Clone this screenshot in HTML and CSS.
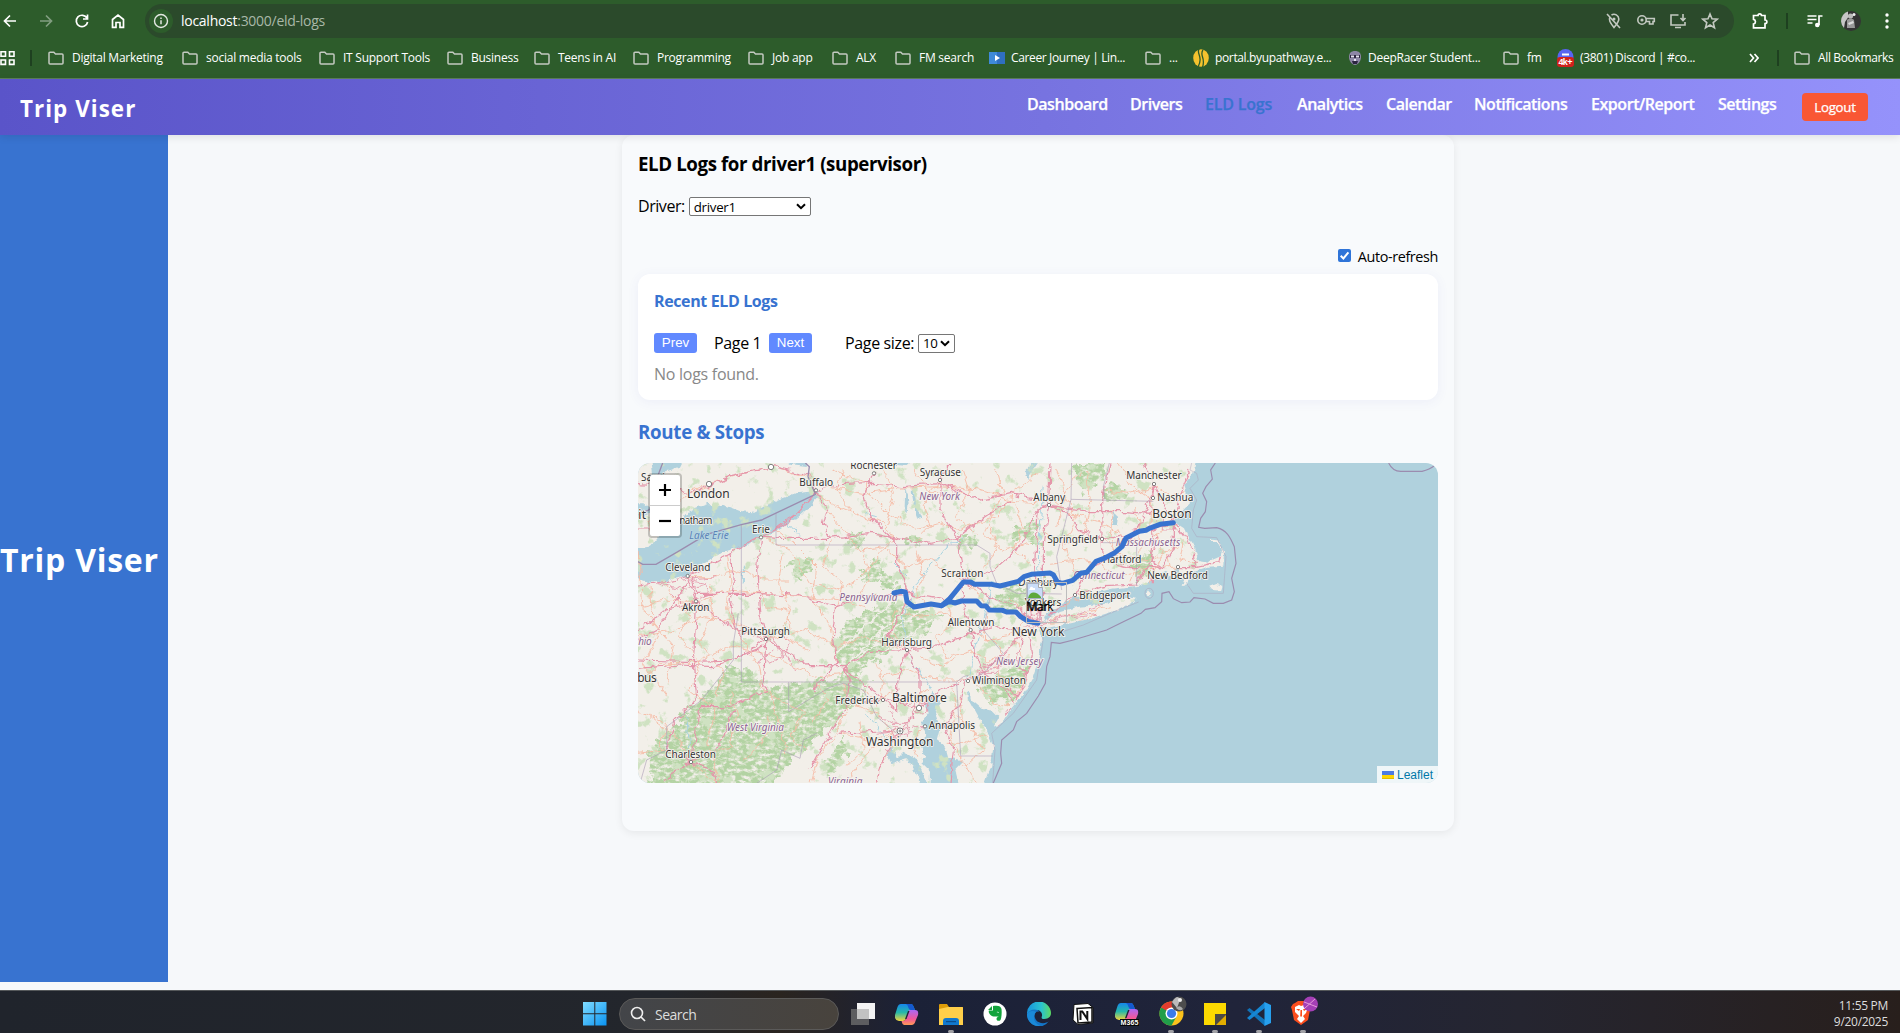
FILE: index.html
```html
<!DOCTYPE html>
<html lang="en">
<head>
<meta charset="utf-8">
<title>Trip Viser</title>
<link rel="stylesheet" href="styles.css">
</head>
<body>
<svg width="0" height="0" class="defs">
  <defs>
    <symbol id="folder" viewBox="0 0 16 14"><path d="M1 2.2V12a1 1 0 0 0 1 1h12a1 1 0 0 0 1-1V4a1 1 0 0 0-1-1H7.5L5.800 1.200H2a1 1 0 0 0-1 1z" fill="none" stroke="#c3c9c1" stroke-width="1.500"/></symbol>
  </defs>
</svg>
<header class="chrome">
  <div class="toolbar">
    <div class="tool"><svg width="16" height="16" viewBox="0 0 16 16"><path d="M14 8H3M8 2.500 2.500 8 8 13.500" class="line"/></svg></div>
    <div class="tool dim"><svg width="16" height="16" viewBox="0 0 16 16"><path d="M2 8h11M8 2.500 13.500 8 8 13.500" class="line"/></svg></div>
    <div class="tool"><svg width="16" height="16" viewBox="0 0 16 16"><path d="M13 5.200A5.700 5.700 0 1 0 13.600 9M13.500 1.500v4.500H9" class="line"/></svg></div>
    <div class="tool"><svg width="16" height="16" viewBox="0 0 16 16"><path d="M2.500 14.300V6.500L8 2l5.500 4.500v7.800H10V9.500H6v4.800z" class="line"/></svg></div>
    <div class="omnibox">
      <span class="info"><svg width="16" height="16" viewBox="0 0 16 16"><circle cx="8" cy="8" r="6.500" fill="none" stroke="#e3e8e2" stroke-width="1.400"/><path d="M8 7.200v4M8 4.400v1.500" stroke="#e3e8e2" stroke-width="1.500"/></svg></span>
      <span class="url"><b>localhost</b>:3000/eld-logs</span>
      <div class="omni-icons">
        <span><svg width="18" height="18" viewBox="0 0 18 18"><path d="M5 4.500C3.500 8 5 10.500 9 15.500 12 12 13.800 9.500 13.800 7A4.800 4.800 0 0 0 6.500 3M2 2l13 14" class="muted"/><circle cx="9" cy="7" r="1.500" fill="#c3c9c1"/></svg></span>
        <span><svg width="20" height="16" viewBox="0 0 20 16"><circle cx="6" cy="8" r="4.200" class="muted"/><circle cx="6" cy="8" r="1.600" fill="#c3c9c1"/><path d="M10 6.500h8.300v3H17v2.500h-3.500V9.500H10" class="muted"/></svg></span>
        <span><svg width="18" height="18" viewBox="0 0 18 18"><path d="M9.500 3H2v10h14v-3M14 2v6M11.500 6 14 8.500 16.500 6M6 15.500h6" class="muted"/></svg></span>
        <span><svg width="18" height="18" viewBox="0 0 18 18"><path d="m9 2 2 4.800 5.200.4-4 3.400 1.300 5.100L9 13l-4.500 2.700 1.300-5.100-4-3.400 5.200-.4z" class="muted"/></svg></span>
      </div>
    </div>
    <div class="tool right"><svg width="18" height="18" viewBox="0 0 18 18"><path d="M2.500 3.500H7c0-2.300 3.500-2.300 3.500 0H14V8c2.500 0 2.500 3.500 0 3.500v4.300H2.500V12c2.600-.5 2.600-4.200 0-4.700z" class="line"/></svg></div>
    <i class="sep"></i>
    <div class="tool"><svg width="18" height="18" viewBox="0 0 18 18"><path d="M1.500 4h9M1.500 7.500h9M1.500 11h5M13 13V4h3.500" class="line"/><circle cx="11.300" cy="13" r="2.300" fill="#fff"/></svg></div>
    <div class="tool"><svg width="20" height="20" viewBox="0 0 20 20"><circle cx="10" cy="10" r="10" fill="#343434"/><path d="M2 4a10 10 0 0 1 5-3.500v6L4 11l-1 6A10 10 0 0 1 2 4z" fill="#c6c6c6"/><circle cx="9.500" cy="5" r="2.600" fill="#bbb"/><circle cx="13" cy="3.500" r="1.500" fill="#eee"/><path d="M6 9c2-2 5-2 7 0l1 8H6z" fill="#999"/><path d="M7 12l5-2 1 2-5 2z" fill="#ddd"/></svg></div>
    <div class="tool last"><svg width="4" height="16" viewBox="0 0 4 16" fill="#fff"><circle cx="2" cy="2" r="1.700"/><circle cx="2" cy="8" r="1.700"/><circle cx="2" cy="14" r="1.700"/></svg></div>
  </div>
  <div class="bookmarks">
    <span class="apps"><svg width="16" height="16" viewBox="0 0 16 16"><path d="M1 1.800h4.500v4.400H1zM9.500 1.800H14v4.400H9.500zM1 10h4.500v4.400H1zM9.500 10H14v4.400H9.500z" fill="none" stroke="#fff" stroke-width="1.600"/></svg><i class="sep"></i></span>
    <span class="bm"><svg class="fold"><use href="#folder"/></svg>Digital Marketing</span>
    <span class="bm"><svg class="fold"><use href="#folder"/></svg>social media tools</span>
    <span class="bm"><svg class="fold"><use href="#folder"/></svg>IT Support Tools</span>
    <span class="bm"><svg class="fold"><use href="#folder"/></svg>Business</span>
    <span class="bm"><svg class="fold"><use href="#folder"/></svg>Teens in AI</span>
    <span class="bm"><svg class="fold"><use href="#folder"/></svg>Programming</span>
    <span class="bm"><svg class="fold"><use href="#folder"/></svg>Job app</span>
    <span class="bm"><svg class="fold"><use href="#folder"/></svg>ALX</span>
    <span class="bm"><svg class="fold"><use href="#folder"/></svg>FM search</span>
    <span class="bm site tight"><svg width="16" height="16" viewBox="0 0 16 16"><path d="M0 2h16v12H0z" fill="#2f6fc0"/><path d="M0 2h8v12H0z" fill="#3f8ad8"/><path d="m6 5 5 3-5 3z" fill="#fff"/></svg>Career Journey | Lin...</span>
    <span class="bm"><svg class="fold"><use href="#folder"/></svg>...</span>
    <span class="bm site tight"><svg width="16" height="18" viewBox="0 0 16 18"><ellipse cx="8" cy="9" rx="7.800" ry="8.800" fill="#f5c22e"/><path d="M6 0C3 5 11 8 5 18M10 1C6 6 13 9 9.500 18" stroke="#2d5c2b" stroke-width="1.300" fill="none"/></svg>portal.byupathway.e...</span>
    <span class="bm site"><svg width="14" height="16" viewBox="0 0 14 16"><path d="M7 1c4 0 6 2 6 6s-3 8-6 8-6-4-6-8 2-6 6-6z" fill="#8d86a5"/><path d="M2 5h10v3H2zM4 11h6l-1 3H5z" fill="#2c2540"/><path d="M3 5.500h3v2H3zM8 5.500h3v2H8zM6 9h2v2H6z" fill="#e8e4f2"/></svg>DeepRacer Student...</span>
    <span class="bm"><svg class="fold"><use href="#folder"/></svg>fm</span>
    <span class="bm site tight"><svg width="17" height="18" viewBox="0 0 17 18"><circle cx="8.500" cy="8" r="8" fill="#5865f2"/><path d="M5 4.500h7v2H5z" fill="#fff"/><rect y="8" width="17" height="10" rx="3" fill="#d0211c"/><text x="1.500" y="16" class="badge" textLength="14">4k+</text></svg>(3801) Discord | #co...</span>
    <span class="more"><svg width="10" height="10" viewBox="0 0 10 10"><path d="m1 1 3.500 4L1 9M5.500 1 9 5 5.500 9" class="line"/></svg><i class="sep"></i></span>
    <span class="bm tight"><svg class="fold"><use href="#folder"/></svg>All Bookmarks</span>
  </div>
</header>

<nav class="navbar">
  <div class="brand">Trip Viser</div>
  <div class="links">
    <a>Dashboard</a><a>Drivers</a><a class="active">ELD Logs</a><a>Analytics</a><a>Calendar</a><a>Notifications</a><a>Export/Report</a><a>Settings</a>
    <button class="logout">Logout</button>
  </div>
</nav>

<div class="page">
  <aside class="sidebar">Trip Viser</aside>
  <main class="main">
    <section class="panel">
      <h3 class="title">ELD Logs for driver1 (supervisor)</h3>
      <div class="driver"><label>Driver:</label><span class="select wide">driver1<svg width="10" height="7" viewBox="0 0 10 7"><path d="m1 1.200 4 4 4-4"/></svg></span></div>
      <div class="refresh"><span class="check"><svg width="13" height="13" viewBox="0 0 13 13"><path d="m2.700 6.800 2.700 2.700 5-6.200" fill="none" stroke="#fff" stroke-width="2"/></svg></span><span>Auto-refresh</span></div>
      <div class="card">
        <h4>Recent ELD Logs</h4>
        <div class="pager"><button class="pg">Prev</button><span class="pageno">Page 1</span><button class="pg">Next</button><span class="size">Page size:</span><span class="select small">10<svg width="10" height="7" viewBox="0 0 10 7"><path d="m1 1.200 4 4 4-4"/></svg></span></div>
        <p class="empty">No logs found.</p>
      </div>
      <h3 class="route">Route &amp; Stops</h3>
      <div class="map">
        <svg class="tiles" viewBox="24 39 2400 960" width="800" height="320">
          <defs>
            <filter id="rough" x="-5%" y="-5%" width="110%" height="110%"><feTurbulence type="fractalNoise" baseFrequency=".035" numOctaves="3" seed="4"/><feDisplacementMap in="SourceGraphic" scale="26" xChannelSelector="R" yChannelSelector="G"/></filter>
            <filter id="coast" x="-5%" y="-5%" width="110%" height="110%"><feTurbulence type="fractalNoise" baseFrequency=".05" numOctaves="3" seed="9"/><feDisplacementMap in="SourceGraphic" scale="16" xChannelSelector="R" yChannelSelector="G"/></filter>
            <filter id="woods" x="0" y="0" width="100%" height="100%"><feTurbulence type="fractalNoise" baseFrequency=".03" numOctaves="4" seed="7" result="n"/><feDisplacementMap in="SourceGraphic" in2="n" scale="60" xChannelSelector="R" yChannelSelector="G" result="d"/><feTurbulence type="fractalNoise" baseFrequency=".06 .09" numOctaves="4" seed="3" result="f"/><feColorMatrix in="f" values="0 0 0 0 0  0 0 0 0 0  0 0 0 0 0  0 3 0 0 -.75" result="m"/><feComposite in="d" in2="m" operator="in"/></filter>
            <filter id="specks" x="0" y="0" width="100%" height="100%"><feTurbulence type="fractalNoise" baseFrequency=".025" numOctaves="5" seed="21" result="n"/><feColorMatrix in="n" values="0 0 0 0 0  0 0 0 0 0  0 0 0 0 0  0 9 0 0 -5.500" result="m"/><feComposite in="SourceGraphic" in2="m" operator="in"/></filter>
            <clipPath id="landclip"><path d="M24 39H1695L1685 70 1660 110 1670 160 1640 190 1630 215 1660 235 1675 260 1690 290 1700 325 1780 320 1780 345 1700 355 1600 400 1508 408 1520 450 1380 506 1250 530 1215 550 1225 590 1205 680 1140 780 1100 835 1060 780 1010 720 1040 790 1088 880 1060 999H24z"/></clipPath>
          </defs>
          <rect x="24" y="39" width="2400" height="960" fill="#b0d1dd"/>
          <g filter="url(#coast)" fill="#f2efe9">
            <path d="M0 20H1700L1690 70 1662 105 1680 160 1650 190 1632 215 1662 235 1675 265 1695 295 1704 330 1740 336 1772 322 1776 300 1762 276 1740 276 1740 269 1766 271 1782 305 1780 347 1735 350 1705 360 1682 380 1665 405 1652 375 1640 350 1632 388 1600 365 1588 380 1560 388 1545 405 1500 410 1440 417 1380 432 1330 444 1290 466 1252 492 1238 515 1228 540 1236 575 1222 640 1207 684 1180 732 1140 780 1104 836 1092 828 1108 800 1090 782 1060 778 1030 752 1010 722 1014 748 1040 795 1072 845 1090 890 1084 945 1060 1020H0z"/>
            <path d="M1242 512 1290 486 1345 470 1425 464 1480 440 1520 450 1470 478 1380 506 1300 524 1250 534 1234 530zM1656 404l22-8-12 16zM1738 410l22-8 18 6-4 14-28-2zM1546 430l8-12 10 12-6 10z"/>
          </g>
          <g fill="#b0d1dd" filter="url(#coast)">
            <path d="M0 296 60 290 100 240 150 215 180 180 230 162 280 165 330 183 370 187 440 150 500 130 560 122 570 135 540 170 500 205 450 235 390 268 330 292 270 308 215 342 170 378 110 392 60 398 0 380zM62 20H165L150 50 115 62 100 82 70 80zM0 160 40 160 62 176 60 192 0 212zM440 20H535L530 48 480 42zM770 20H860L830 48 790 44z"/>
            <path d="M905 720 888 760 896 790 874 820 890 860 868 880 886 915 874 940 900 965 898 1020H990L976 960 1000 935 955 925 945 890 920 870 930 830 915 790 930 755zM784 880 768 915 784 942 830 928 858 965 876 1020 895 1005 862 930 820 905 800 925 792 905zM845 120l8 60 10 30 14-4-16-40-10-50zM826 110l-2 60 8 20 4-30zM1184 65l20-20 10-20 20-5-20 30-24 40zM1452 190l12 10-4 30-12-10z"/>
          </g>
          <g clip-path="url(#landclip)">
            <g filter="url(#woods)" fill="#b3d3a3">
              <path d="M50 930 100 860 180 770 250 710 300 640 360 650 400 720 480 700 600 690 660 660 720 690 690 760 640 800 560 860 480 940 420 1020H60z"/>
              <path d="M610 600 640 540 700 490 770 455 830 470 900 490 935 490 900 540 800 590 720 650 650 690 620 640zM465 350 500 320 545 320 550 350 520 382 480 378zM740 400 770 365 800 370 805 415 770 425zM650 250 700 245 710 270 670 290zM1150 230 1200 220 1225 250 1210 280 1160 270zM1340 39H1420L1415 80 1370 130 1340 120zM1425 110 1480 105 1500 145 1430 150zM1100 430 1160 400 1230 400 1240 440 1160 480 1100 500zM1050 700 1130 660 1200 640 1150 760 1080 760zM820 260 870 255 880 280 830 285zM980 255 1040 250 1035 290 990 290zM640 860 580 940 600 990 650 900zM1190 220 1225 215 1225 290 1195 270zM1510 330l50-30 10 50-50 40zM690 350l60-30 10 60-50 20z"/>
            </g>
            <path d="M24 39H1700V999H24z" filter="url(#specks)" fill="#cfe2c2"/>
            <g filter="url(#rough)" fill="none">
              <path stroke="#f2efe9" stroke-width="5" d="M640 660 730 560 830 480M670 640 780 540 870 490M700 650 830 560 910 510M620 610 700 530 780 470M500 960 640 800 720 690"/>
              <path stroke="#a9d3e0" stroke-width="3" d="M830 602 850 640 880 680 905 720M830 602 820 500 860 400 940 300 1000 260M475 220 510 260M790 340 830 380M780 880 740 820 700 790M340 350 340 400M1230 510 1225 300 1240 100M700 190 740 200M170 800 183 935M1090 390 1060 500 1010 700"/>
              <path class="minor" d="M24 470 100 450 198 455 300 420 400 430 520 440 640 450 700 470M24 560 120 545 220 500 330 520 408 565 520 540 620 590 700 560 830 600M100 400 180 500 150 560 210 640 180 720 260 780 230 880 270 1000M24 700 90 640 190 640 300 590 400 610 480 640 560 680 640 670M24 780 110 820 90 900M290 320 300 400 290 480 330 560 380 640 400 720 520 790 480 860 530 900M393 262 480 300 540 400 620 420 680 390 760 300 800 260M440 240 490 280 560 350 550 450 600 530 620 640M590 180 640 240 690 300 760 290 830 350 900 330 1000 395M600 110 700 130 800 115 930 110 1050 120 1140 150 1225 160M610 60 700 100 732 150 780 190 850 240 930 220 980 240 1100 200 1160 120 1225 70M930 90 880 160 900 230 860 270M830 600 780 540 800 480 860 500 950 490 1020 540M950 460 970 520 920 560 950 620 1020 600 1080 630 1140 620M1020 400 1080 480 1060 550 1120 610M1020 540 1080 570 1130 560 1180 540M1140 440 1190 500 1150 560 1180 620M760 680 830 660 880 680 940 690 1010 690M640 700 660 760 620 840 560 930 540 1000M660 760 740 790 790 850 720 900 660 980M810 840 760 930 740 1000M810 840 730 870 630 850M960 700 980 760 960 860 990 920 1040 1000M980 800 1020 830 1060 900 1000 950M1040 700 1090 760 1140 770M1090 650 1160 740 1180 700 1110 680M1260 140 1320 190 1420 220 1480 260 1540 280 1600 240M1240 240 1300 280 1416 268 1480 320 1560 330 1640 290M1260 340 1340 330 1410 340 1460 380 1550 360 1644 350M1350 60 1300 140 1340 200 1300 280 1350 400M1430 120 1500 130 1570 110 1620 140 1680 120M1470 40 1500 100 1570 150 1560 220 1600 300 1560 400M24 300 40 480 90 540 40 640 110 740M173 380 260 380 330 360 400 390 480 390M480 540 470 480 410 470 380 410M1090 190 1060 250 1120 300 1200 280M560 130 620 170 700 200 760 220 790 270M100 80 160 130 240 100 340 70 430 50 540 80M60 250 60 210 140 150 240 110M24 910 100 900 183 935 260 1000M183 935 300 890 320 800 300 720M420 720 450 840 470 910M880 830 850 870 860 920M1260 480 1340 450 1420 440M1260 505 1360 490 1440 470M1250 520 1340 515 1400 490"/>
              <path class="minor" d="M60 410 70 520 130 590 110 700M240 400 250 480 210 580 280 660 260 740M460 310 440 400 480 470 460 560 540 600M600 270 580 350 640 400 620 480M700 300 720 380 690 440M850 280 880 380 860 440 900 470M1080 230 1100 300 1060 360M1150 160 1180 230 1150 300 1200 340M640 60 620 110 660 180M760 60 790 130 770 220M850 60 900 130 1000 130M1000 60 1020 120 980 200 1040 250M1100 60 1120 130 1080 200M700 720 740 750 790 720 830 750 900 720M340 930 400 880 420 800M560 700 590 750 550 820M60 800 150 870 180 940M870 620 930 650 980 620M740 640 760 700 740 770M690 820 700 900 650 950M950 880 1000 880 1050 860M990 740 1000 840 1070 860M1280 60 1310 130 1280 230M1370 60 1380 180 1360 260M1450 180 1440 260 1460 330M1520 170 1530 300 1500 400M1660 270 1650 330 1700 340M1610 300 1620 350"/>
              <path class="road" d="M24 405 110 395 173 378 230 350 300 310 393 262 470 220 557 130 600 105 732 100 820 110 930 100 1050 150 1145 130 1220 150 1256 165 1380 185 1480 185 1560 190 1572 110 1540 40M173 378 198 455 270 510 350 550 408 567 460 600 540 650 640 650 660 690 650 760 600 850 540 960M24 540 110 480 198 455M24 570 80 540 173 400M24 630 190 635 300 630 360 600 408 567M24 655 150 645 250 650 400 590M408 567 400 700 410 720 300 770 210 770 183 935M190 380 200 455 190 640 200 740 130 820 110 900 183 935 100 990M183 935 270 890 310 780M183 935 250 960 260 1000M393 262 380 350 390 500 408 567M200 430 360 430 500 435 620 470 700 440 830 430 950 450 1000 400M300 310 310 400 300 480 330 560M24 100 120 110 180 130 300 80 430 50 540 75 560 125 590 180 580 220 600 265 440 265 393 262M620 470 610 560 620 640 550 720M540 650 640 650 700 700 770 750M640 650 720 610 831 600 930 590 1020 550 1100 530 1180 540M831 600 800 700 800 780 760 750 660 760M831 600 870 680 870 774 810 840 770 900 740 1000M810 840 620 850M770 750 870 774 930 720 1010 690 1060 670 1120 610 1180 550M831 600 770 560 820 480 840 440 800 340 800 280 720 200 700 140 732 70M600 265 720 250 800 265 900 280 980 265 1050 210 1140 150M980 265 930 180 930 90 960 40M980 265 990 330 1000 390 1000 470 1020 540 1040 620 1060 670M1000 390 1080 440 1160 470 1220 520M1000 390 1090 360 1160 300 1225 180 1256 165 1260 40M1256 165 1240 280 1240 400 1230 510M1225 180 1216 300 1210 400 1220 520M1256 165 1330 200 1340 240 1416 268 1420 330 1380 360 1335 435 1250 500M1416 268 1500 260 1560 230 1630 215M1416 268 1415 150 1430 90 1440 40M1420 330 1480 290 1500 260 1540 200 1572 110M1420 330 1500 350 1570 350 1590 360 1630 300 1630 215M1570 350 1570 400M1335 435 1420 410 1520 405 1560 340 1580 260M1630 215 1570 240 1560 330 1600 360M1630 215 1600 160 1572 110M1630 215 1690 300 1700 350 1644 350M1700 350 1770 335 1778 300M1630 215 1660 110 1680 60M870 774 900 745M960 1000 970 900 940 830 990 760 1010 690M1180 560 1160 640 1190 680M1110 690 1170 740 1190 700M1200 560 1210 620 1160 760 1100 835M1060 670 1130 720 1150 760M20 240 60 240M560 125 500 190 430 240"/>
              <path class="road thin" d="M790 820 830 820 840 850 800 865 785 840M750 800 790 820 810 842 850 830 880 830M780 780 800 820M740 850 800 840M1200 500 1230 480 1220 530 1195 520 1230 510M1200 470 1210 540M1180 490 1240 520M1190 530 1230 550M1240 500 1210 470M1190 510 1250 540M850 750 890 760 890 790 850 795zM820 760 900 740M1070 640 1100 640 1100 670 1060 670zM1060 650 1130 630M1040 670 1110 650M1050 690 1090 690M1230 525 1300 505 1400 490M1250 510 1330 495 1420 465M1600 200 1600 240 1640 240M1580 220 1640 200M400 540 440 580 460 620 420 640 380 600M408 567 450 540 480 580 460 620M420 550 500 660M380 640 430 600M173 390 220 400 240 430 190 450M150 390 260 380M80 400 170 420 230 400M130 430 190 490"/>
            </g>
          </g>
          <g fill="none" stroke="#a99bb5" stroke-width="2.500" opacity=".7">
            <path d="M334 224V696H980L1000 680 1016 676M438 190V285H1040L1080 310V350L1100 400 1160 430 1295 432M1080 445 1060 540 1120 610 1060 670 1014 690M476 696V785L560 735 600 712 640 700 700 720 740 800 800 850M560 850 520 870 510 925 455 900 440 960 380 1000M325 490 310 580 310 630 215 750 150 800 110 830 110 900 50 930 30 1000M980 696 992 918H1088M1325 39 1323 148 1570 154M1323 148 1280 320 1295 420M1418 278H1520V408M1438 39 1420 110 1425 148"/>
            <path d="M1685 39 1680 60 1700 70 1705 90 1680 115 1700 150 1690 180 1685 235 1700 260 1760 263 1788 320 1785 360 1780 430 1690 430 1670 400M1526 456 1440 490 1360 525 1280 550 1240 540 1238 580 1220 690 1150 790 1085 850 1095 900 1088 999M1545 430c0-20 25-20 25 0s-25 20-25 0z" stroke-width="1.800"/>
          </g>
          <g fill="none" stroke="#9b8caf" stroke-width="4">
            <path d="M24 335 38 343H78L145 304 230 253 334 224 395 210 556 133 534 80 538 50 526 39M24 195 60 178 75 100 98 39"/>
            <path d="M1756 39 1742 60 1747 87 1728 110 1718 130 1730 155 1726 185 1712 205 1706 232 1724 235 1760 233C1790 240 1800 260 1813 290L1818 340 1805 385 1813 425 1805 450 1780 460H1750L1725 447 1692 443 1680 456 1655 458 1630 446 1617 425 1596 430 1595 455 1575 473 1546 478 1533 490 1480 515 1430 540 1370 558 1330 570 1290 580 1264 577 1260 620 1250 650 1246 700 1225 738 1190 790 1160 815 1150 840 1115 870 1112 910 1115 940 1090 999" stroke-width="3.500"/>
            <path d="M2276 39C2285 58 2296 64 2312 64H2376Q2400 58 2412 48" stroke-width="3.500"/>
          </g>
          <g class="dots"><circle cx="237" cy="102" r="8"/><circle cx="423" cy="51" r="8"/><circle cx="867" cy="774" r="8"/><circle cx="810" cy="843" r="9"/><circle cx="810" cy="843" r="3"/><circle cx="558" cy="121" r="5"/><circle cx="732" cy="70" r="5"/><circle cx="930" cy="90" r="5"/><circle cx="393" cy="262" r="5"/><circle cx="173" cy="378" r="5"/><circle cx="198" cy="454" r="5"/><circle cx="408" cy="567" r="5"/><circle cx="831" cy="600" r="5"/><circle cx="1022" cy="540" r="5"/><circle cx="1014" cy="693" r="5"/><circle cx="759" cy="750" r="5"/><circle cx="885" cy="829" r="5"/><circle cx="183" cy="936" r="5"/><circle cx="1257" cy="165" r="5"/><circle cx="1572" cy="102" r="5"/><circle cx="1569" cy="144" r="5"/><circle cx="1416" cy="267" r="5"/><circle cx="1644" cy="351" r="5"/><circle cx="1335" cy="435" r="5"/></g>
          <g class="places">
            <text x="33" y="92" textLength="88">Sarnia</text><text x="148" y="221" textLength="99">natham</text><text x="508" y="108" textLength="101">Buffalo</text><text x="661" y="57" textLength="140">Rochester</text><text x="869" y="78" textLength="124">Syracuse</text><text x="366" y="248" textLength="54">Erie</text><text x="106" y="364" textLength="135">Cleveland</text><text x="156" y="484" textLength="82">Akron</text><text x="334" y="556" textLength="146">Pittsburgh</text><text x="934" y="381" textLength="126">Scranton</text><text x="953" y="527" textLength="140">Allentown</text><text x="754" y="587" textLength="152">Harrisburg</text><text x="1026" y="703" textLength="162">Wilmington</text><text x="616" y="761" textLength="130">Frederick</text><text x="896" y="838" textLength="139">Annapolis</text><text x="106" y="924" textLength="152">Charleston</text><text x="1210" y="153" textLength="95">Albany</text><text x="1489" y="88" textLength="166">Manchester</text><text x="1582" y="153" textLength="108">Nashua</text><text x="1252" y="278" textLength="152">Springfield</text><text x="1418" y="339" textLength="116">Hartford</text><text x="1552" y="387" textLength="182">New Bedford</text><text x="1348" y="446" textLength="152">Bridgeport</text><text x="1165" y="407" textLength="119">Danbury</text><text x="1184" y="467" textLength="110">Yonkers</text>
            <g class="big"><text x="171" y="144" textLength="128">London</text><text x="25" y="208" textLength="23">it</text><text x="22" y="695" textLength="58">bus</text><text x="786" y="757" textLength="164">Baltimore</text><text x="708" y="887" textLength="202">Washington</text><text x="1145" y="559" textLength="158">New York</text><text x="1567" y="204" textLength="118">Boston</text></g>
            <g class="state"><text x="868" y="149" textLength="122">New York</text><text x="628" y="453" textLength="174">Pennsylvania</text><text x="290" y="844" textLength="172">West Virginia</text><text x="1098" y="644" textLength="141">New Jersey</text><text x="594" y="1005" textLength="103">Virginia</text><text x="1457" y="287" textLength="194">Massachusetts</text><text x="1330" y="386" textLength="154">Connecticut</text><text x="25" y="586" textLength="40">hio</text><text x="178" y="267" textLength="118" class="lake">Lake Erie</text></g>
          </g>
          <g fill="none" stroke="#3873cf" stroke-width="15" stroke-linejoin="round" stroke-linecap="round">
            <path d="M792 429 812 424 826 426 831 455 852 471 903 462 935 467 960 445 1000 396H1022L1034 403 1085 403 1110 408 1165 394 1182 380 1204 373 1260 369 1270 374 1282 396 1297 400 1328 391 1352 370 1370 367 1398 334 1420 326 1452 310 1476 290 1488 264 1528 244 1548 241 1558 235 1590 223 1630 218"/>
            <path d="M935 467 958 454 975 459 994 453H1040L1053 467 1068 468 1078 480 1118 481 1130 486 1158 486 1172 500 1195 514 1224 520"/>
          </g>
        </svg>
        <div class="marker"><svg width="16" height="16" viewBox="0 0 16 16"><path d="M.5.500h11l4 4v11H.5z" fill="#c9dcf8" stroke="#a8b1c4"/><path d="M11.500.500v4h4" fill="#fff" stroke="#aaa"/><path d="M3 5c1-2 3-1 3 0h2v2H2z" fill="#fff"/><path d="M1 15c2-7 8-7 13-1v1z" fill="#5ea83a"/></svg><span>Mark</span><span class="over">Mar</span></div>
        <div class="zoom"><span><svg width="14" height="14" viewBox="0 0 14 14"><path d="M7 1v12M1 7h12"/></svg></span><span><svg width="14" height="14" viewBox="0 0 14 14"><path d="M1 7h12"/></svg></span></div>
        <div class="credit"><svg width="12" height="8" viewBox="0 0 12 8"><path d="M0 0h12v4H0z" fill="#4c7be1"/><path d="M0 4h12v3H0z" fill="#ffd500"/><path d="M0 7h12v1H0z" fill="#e0bc00"/></svg>Leaflet</div>
      </div>
    </section>
  </main>
</div>

<footer class="taskbar">
  <div class="cell"><svg width="24" height="24" viewBox="0 0 24 24"><defs><linearGradient id="win" x2="1" y2="1"><stop stop-color="#7fdcff"/><stop offset="1" stop-color="#0a93f2"/></linearGradient></defs><path d="M0 0h11.300v11.300H0zM12.300 0H23.500v11.300H12.300zM0 12.300h11.300v11.200H0zM12.300 12.300H23.500v11.200H12.300z" fill="url(#win)"/></svg></div>
  <div class="search"><svg width="16" height="16" viewBox="0 0 16 16"><circle cx="7" cy="7" r="5.500" fill="none" stroke="#eee" stroke-width="1.600"/><path d="m11 11 4 4" stroke="#eee" stroke-width="1.700"/></svg>Search</div>
  <div class="cell"><svg width="24" height="22" viewBox="0 0 24 22"><path d="M6 0h18v16H6z" fill="#f3f3f3"/><path d="M0 6h18v16H0z" fill="#6d6d6d" opacity=".8"/><path d="M6 6h12v10H6z" fill="#c2c2c2"/></svg></div>
  <div class="cell"><svg width="24" height="22" viewBox="0 0 24 22"><use href="#copilot"/></svg></div>
  <div class="cell run"><svg width="24" height="22" viewBox="0 0 24 22"><path d="M0 2a1 1 0 0 1 1-1h7l2 3h14v6H0z" fill="#dd9c08"/><path d="M0 6 9 4h14a1 1 0 0 1 1 1v17H0z" fill="#ffcf4a"/><path d="M4 22v-4q0-3 3-3h10q3 0 3 3v4z" fill="#1178ce"/><path d="M7 18h10v1.200H7z" fill="#0a4c8c"/></svg></div>
  <div class="cell"><svg width="24" height="24" viewBox="0 0 24 24"><circle cx="12" cy="12" r="11.500" fill="#fff"/><path d="M9 4v4H5zM10 4c5-1 8 0 8.500 3 .5 4 0 9-1 11-1 1.500-4 1-4-1s2-2.500 3-1.500c-2-2.500-6 .5-9-2.500-2-2-2-4-1.500-4.500H10z" fill="#12a33b"/><path d="M13.500 10q2-1 2.500 1z" fill="#fff"/></svg></div>
  <div class="cell"><svg width="24" height="24" viewBox="0 0 24 24"><defs><linearGradient id="eg" x2="1"><stop stop-color="#1793dc"/><stop offset=".6" stop-color="#2bc3cf"/><stop offset="1" stop-color="#5cdb62"/></linearGradient></defs><path d="M0 12A12 12 0 0 1 24 11c0 4-3 6-7 6-2 0-3-1-2-3C16 8 8 5 0 12z" fill="url(#eg)"/><path d="M0 12c2-5 10-6 13-2-5-2-7 4-4 8s10 4 13 1A12 12 0 0 1 0 12z" fill="#1475c8"/><path d="M9 10c-4 5-2 11 4 13.800C7 25 0 20 0 12c2-3 6-4 9-2z" fill="#1b8ad8"/></svg></div>
  <div class="cell"><svg width="22" height="22" viewBox="0 0 22 22"><path d="M2 1.500 16 .5l5 4V20L6 21.500 1 17z" fill="#fff" stroke="#111"/><path d="m5 5.500 15-1V19L6 20z" fill="#fff" stroke="#111" stroke-width="1.500"/><path d="M8.500 17V8.500h1.800l5 7.500V8" fill="none" stroke="#111" stroke-width="2"/></svg></div>
  <div class="cell"><svg width="24" height="24" viewBox="0 0 24 24"><defs><linearGradient id="cl" x2="0" y2="1"><stop stop-color="#1686ea"/><stop offset=".5" stop-color="#25b8a9"/><stop offset="1" stop-color="#f4d43c"/></linearGradient><linearGradient id="cr" x2="0" y2="1"><stop stop-color="#a968f5"/><stop offset=".6" stop-color="#f25798"/><stop offset="1" stop-color="#ff9b55"/></linearGradient><g id="copilot"><path d="M6 1h10q2 0 2.800 3L20 7h-4q-2 0-3 3l-2 6q-1 2-3 2H4q-5-1-4-6L2.500 4Q3.500 1 6 1z" fill="url(#cl)"/><path d="M11 1h5q2 0 2.800 3L20 7h-4q-2 0-2.500-2Q13 2 11 1z" fill="#1559cf"/><path d="M14 7h6q4 0 3 5l-2.500 6q-1 4-4 4H9q-2-1-2.500-4h2q2 0 3-3l1.500-5q.5-2 1-3z" fill="url(#cr)"/><path d="m13 8-3 8h1.500l3-8z" fill="#20243a"/></g></defs><use href="#copilot"/><path d="M5 17h19v7H5z" fill="#080808"/><text x="5.500" y="23" class="m365" textLength="18">M365</text></svg></div>
  <div class="cell run"><svg class="badged" width="28" height="30" viewBox="0 0 28 30"><circle cx="12.500" cy="17.500" r="12" fill="#fbc21c"/><path d="M2.100 11.500A12 12 0 0 1 23 11.500H12.500L7.300 20.500z" fill="#e33b2e"/><path d="M2.100 11.500A12 12 0 0 0 12.500 29.500l5-9z" fill="#209e4a"/><circle cx="12.500" cy="17.500" r="6" fill="#fff"/><circle cx="12.500" cy="17.500" r="4.600" fill="#3a7bea"/><circle cx="20" cy="8" r="7.500" fill="#4d4d4d"/><path d="M13 6q6-9 8-2l-3 8z" fill="#bbb"/><circle cx="21" cy="4" r="2" fill="#eee"/><path d="M17 12q4-4 7 1-3 3-7-1z" fill="#aaa"/></svg></div>
  <div class="cell run"><svg width="22" height="22" viewBox="0 0 22 22"><path d="M0 0h22v11L11 22H0z" fill="#fcd900"/><path d="M11 22V11h11v11z" fill="#4c4a44"/><path d="M12 22h10V12z" fill="#e1ad00"/></svg></div>
  <div class="cell run"><svg width="24" height="24" viewBox="0 0 24 24"><path d="m0 8 2.500-2L18 18v6z" fill="#1173b9"/><path d="m0 16 2.500 2L18 6V0z" fill="#1686d2"/><path d="m17.500 0 6.500 3v18l-6.500 3z" fill="#27a0ee"/></svg></div>
  <div class="cell run"><svg class="badged" width="28" height="30" viewBox="0 0 28 30"><path d="m4 7 3-2h9l3 3 1 3-1 3-2 10-7 5-7-5L1 14l-1-3 2-3z" fill="#fb4d1d"/><path d="m4 11 4-2 2 1 3-1 4 2-2 6-3 3 2 3-4 4-4-4 2-3-4-4z" fill="#fff"/><path d="M5 13h4l-1 2zM12 13h4l-3 2zM9.500 14h1.500v6l-1 1-.8-1z" fill="#fb4d1d"/><circle cx="19.500" cy="8" r="7.500" fill="#a43fb5"/><path d="m13 6 13 5M14 12 24 3" stroke="#e69ada" fill="none"/></svg></div>
  <div class="clock"><span>11:55 PM</span><span>9/20/2025</span></div>
</footer>
</body>
</html>
```
FILE: styles.css
```css
* { box-sizing: border-box; }
html, body { margin: 0; height: 100%; overflow: hidden; }
body {
  display: flex; flex-direction: column;
  font-family: "Open Sans", "Noto Sans", sans-serif;
  font-size: 16px; color: #000; background: #f6f8fa;
}
svg { display: block; flex: none; }
button { border: 0; font-family: inherit; }
.defs { position: absolute; }

/* browser chrome */
.chrome { height: 79px; flex: none; background: #2d5c2b; border-bottom: 1px solid #5c7f5b; color: #fff; }
.toolbar { display: flex; align-items: center; height: 42px; margin-left: -8px; }
.tool { width: 36px; display: flex; justify-content: center; flex: none; }
.tool.dim { opacity: .4; }
.tool.right { margin-left: 8px; }
.tool.last { margin-right: -5px; }
.line { fill: none; stroke: #fff; stroke-width: 1.7; }
.muted { fill: none; stroke: #c3c9c1; stroke-width: 1.6; }
.sep { width: 2px; height: 16px; background: #1e4020; margin: 0 9px 0 8px; }
.omnibox { flex: 1; height: 34px; margin-left: 9px; border-radius: 17px; background: #2b4a2b; display: flex; align-items: center; padding: 0 8px 0 4px; }
.info { width: 24px; height: 24px; border-radius: 50%; background: #2d5c2b; display: grid; place-items: center; margin-right: 8px; }
.url { font-size: 14px; letter-spacing: -.27px; color: #a9b8a8; margin-top: -1px; }
.url b { font-weight: 400; color: #fff; }
.omni-icons { display: flex; margin-left: auto; }
.omni-icons span { width: 32px; display: flex; justify-content: center; }
.bookmarks {
  display: grid; align-items: center; height: 31px; white-space: nowrap;
  grid-template-columns: 48px 134px 137px 128px 87px 99px 115px 84px 63px 94px 156px 48px 155px 155px 54px 192px 45px 106px;
  font-size: 12px; letter-spacing: -.25px;
}
.bm { display: flex; align-items: center; gap: 8px; }
.bm.site { gap: 6px; }
.bm.tight { letter-spacing: -.36px; }
.fold { width: 16px; height: 14px; }
.apps, .more { display: flex; align-items: center; }
.apps .sep { margin: 0 0 0 14px; }
.more .sep { margin: 0 0 0 18px; }
.badge { font: bold 9px "Liberation Sans", sans-serif; fill: #fff; letter-spacing: 0; }

/* app bar */
.navbar { position: relative; z-index: 2; height: 56px; flex: none; display: flex; justify-content: space-between; padding: 0 32px 0 20px; background: linear-gradient(90deg, #5a54c9, #7773e0 55%, #9592fb); box-shadow: 0 2px 8px rgba(0,0,0,.1); color: #fff; }
.brand { font-weight: 700; font-size: 22.4px; line-height: 59px; letter-spacing: 1.05px; }
.links { display: grid; grid-template-columns: 103px 75px 92px 89px 88px 117px 127px 84px 66px; font-weight: 600; font-size: 16px; letter-spacing: -.45px; line-height: 50px; white-space: nowrap; -webkit-text-stroke: .25px; }
.links .active { color: #3873d0; letter-spacing: -.2px; }
.logout { margin-top: 14px; height: 28px; border-radius: 4px; background: #f95734; color: #fff; font-size: 13.3px; padding: 0; letter-spacing: -.3px; }

.page { flex: 1; display: flex; align-items: flex-start; min-height: 0; }
.sidebar { width: 168px; height: 847px; flex: none; background: #3873d0; color: #fff; font-weight: 700; font-size: 32px; letter-spacing: .75px; line-height: 850px; white-space: nowrap; overflow: hidden; }
.main { flex: 1; display: flex; justify-content: center; padding-left: 8px; }
.panel { width: 832px; height: 696px; padding: 15px 16px 16px; border-radius: 12px; background: #f8fafc; box-shadow: 0 2px 8px rgba(0,0,0,.07); }
h3, h4, p { margin: 0; }
.title, .route { font-size: 18.72px; line-height: 28px; letter-spacing: -.4px; }
.driver { display: flex; align-items: center; gap: 4px; height: 24px; margin-top: 16px; letter-spacing: -.45px; }
.driver label { margin-top: -1px; }
.select { display: flex; align-items: center; justify-content: space-between; height: 19px; padding: 0 4px 0 4px; border: 1px solid #767676; border-radius: 2px; background: #fff; font-size: 13.3px; letter-spacing: -.3px; }
.select path { fill: none; stroke: #000; stroke-width: 2; }
.select.wide { width: 122px; margin-top: 1px; }
.select.small { width: 37px; margin-left: 5px; }
.refresh { display: flex; justify-content: flex-end; align-items: center; gap: 7px; height: 20px; margin-top: 28px; font-size: 14.4px; letter-spacing: -.38px; }
.check { width: 13px; height: 13px; border-radius: 2px; background: #2f74d8; margin-top: -2px; }
.card { height: 126px; margin-top: 8px; padding: 15px 16px; border-radius: 12px; background: #fff; box-shadow: 0 2px 12px rgba(90,84,201,.07); }
.card h4 { font-size: 16px; line-height: 24px; color: #3873d0; letter-spacing: -.38px; }
.route { color: #3873d0; margin-top: 18px; letter-spacing: -.3px; }
.pager { display: flex; height: 24px; align-items: center; margin-top: 18px; letter-spacing: -.35px; white-space: nowrap; }
.pg { width: 43px; height: 20px; border-radius: 3px; background: #6189ff; color: #fff; font: 13.3px "Liberation Sans", sans-serif; padding: 0; margin-top: -1px; }
.pageno { width: 55px; margin-left: 17px; }
.size { width: 68px; margin-left: 33px; }
.empty { color: #888; line-height: 24px; margin-top: 7px; letter-spacing: -.27px; }

/* map */
.map { position: relative; width: 800px; height: 320px; margin-top: 17px; border-radius: 12px; overflow: hidden; }
.minor { stroke: #f6b9a4; stroke-width: 2.6; }
.road { stroke: #e595aa; stroke-width: 3.6; }
.thin { stroke-width: 2.6; }
.dots circle { fill: #fff; stroke: #666; stroke-width: 2.4; }
.places { font: 30px "Noto Sans", sans-serif; fill: #333; stroke: #f7f5f1; stroke-width: 5px; paint-order: stroke; stroke-linejoin: round; }
.big { font-size: 36px; }
.state { font-style: italic; fill: #8b6390; }
.lake { fill: #5b83b8; stroke: #b9d8e2; }
.marker { position: absolute; left: 388px; top: 119px; width: 41px; height: 41px; border: 1px solid #bdbdbd; font-size: 12px; }
.marker span { position: absolute; left: -1px; top: 15px; letter-spacing: -.4px; }
.marker .over { left: 0; }
.zoom { position: absolute; left: 10px; top: 10px; width: 34px; border: 2px solid rgba(0,0,0,.2); border-radius: 4px; background-clip: padding-box; background-color: #fff; }
.zoom span { height: 30px; display: grid; place-items: center; }
.zoom span + span { border-top: 1px solid #ccc; height: 31px; }
.zoom path { stroke: #000; stroke-width: 2.2; }
.credit { position: absolute; right: 0; bottom: 0; height: 17px; padding: 0 5px; display: flex; align-items: center; gap: 3px; background: rgba(255,255,255,.8); color: #0078a8; font: 12px "Liberation Sans", sans-serif; }

/* taskbar */
.taskbar { height: 43px; flex: none; display: flex; align-items: center; padding-left: 573px; border-top: 1px solid #55585a; background: linear-gradient(90deg, #20242c, #23262c 35%, #2a241f 41%, #1b2137 48%, #20243a 65%, #252530 80%, #281f1c); color: #fff; }
.cell { width: 44px; height: 42px; display: flex; flex-direction: column; align-items: center; justify-content: center; padding-top: 4px; position: relative; }
.run::after { content: ""; position: absolute; bottom: 0; left: 19px; width: 6px; height: 3px; border-radius: 2px; background: #a0a0a5; }
.badged { margin: -6px 0 0 4px; }
.search { width: 220px; height: 32px; margin: 4px 2px 0; border-radius: 16px; border: 1px solid #5b5a59; background: linear-gradient(90deg, #434549, #48433d); display: flex; align-items: center; gap: 9px; padding-left: 10px; font-size: 14px; letter-spacing: -.5px; color: #ddd; }
.m365 { font: bold 7px "Liberation Sans", sans-serif; fill: #fff; }
.clock { margin-left: auto; padding: 4px 12px 0 0; display: flex; flex-direction: column; text-align: right; font-size: 12px; line-height: 16px; letter-spacing: -.3px; color: #ddd; }
```
